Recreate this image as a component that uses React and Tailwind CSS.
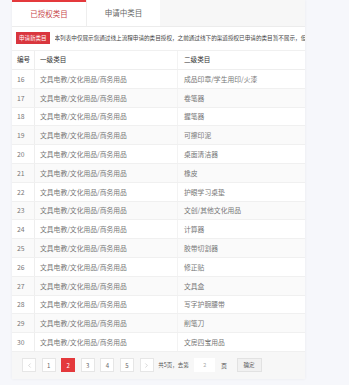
import React from "react";
import { ChevronLeft, ChevronRight } from "lucide-react";

const rows = [
  [16, "成品印章/学生用印/火漆"],
  [17, "卷笔器"],
  [18, "握笔器"],
  [19, "可擦印泥"],
  [20, "桌面清洁器"],
  [21, "橡皮"],
  [22, "护眼学习桌垫"],
  [23, "文创/其他文化用品"],
  [24, "计算器"],
  [25, "胶带切割器"],
  [26, "修正贴"],
  [27, "文具盒"],
  [28, "写字护腕腰带"],
  [29, "削笔刀"],
  [30, "文房四宝用品"],
];

const font = { fontFamily: '"Noto Sans CJK SC", "Noto Sans", sans-serif' };

const PageBtn = ({ children, active }) => (
  <div
    className={`w-[14px] h-[14px] flex items-center justify-center border text-[6px] ${
      active ? "bg-[#e4393c] border-[#e4393c] text-white" : "bg-white border-[#e6e6e6] text-[#666]"
    }`}
  >
    {children}
  </div>
);

const App = () => {
  return (
    <div className="min-h-screen bg-[#f6f7fb] pl-[12px]" style={font}>
      <div className="w-[293px] h-[379px] bg-white shadow-[0_0_3px_rgba(0,0,0,0.06)] flex flex-col">
        {/* tabs */}
        <div className="flex h-[27px] bg-[#f7f7f7] border-b border-[#ececec]">
          <div className="w-[74px] bg-white border-t-2 border-[#e4393c] flex items-center justify-center text-[7.5px] text-[#c8474a]">
            已授权类目
          </div>
          <div className="w-[74px] bg-white border-l border-[#eee] flex items-center justify-center text-[7.5px] text-[#666]">
            申请中类目
          </div>
        </div>

        {/* notice */}
        <div className="flex items-center h-[22px] pl-[4px] gap-[5px] overflow-hidden">
          <div className="shrink-0 h-[12px] px-[3px] bg-[#d9363e] text-white text-[5.5px] flex items-center">
            申请新类目
          </div>
          <div className="whitespace-nowrap overflow-hidden text-[5.6px] text-[#444]">
            本列表中仅展示您通过线上流程申请的类目授权，之前通过线下的渠道授权已申请的类目暂不展示，但
          </div>
        </div>

        {/* table */}
        <div className="mt-[1px] border-t border-[#f0f0f0]">
          <div className="grid grid-cols-[23px_143px_1fr] h-[19px] items-stretch text-[6.6px] text-[#333] border-b border-[#eee]">
            <div className="flex items-center pl-[5px] border-r border-[#eee]">编号</div>
            <div className="flex items-center pl-[5px] border-r border-[#f3f3f3]">一级类目</div>
            <div className="flex items-center pl-[6px]">二级类目</div>
          </div>
          {rows.map(([id, name], i) => (
            <div
              key={id}
              className={`grid grid-cols-[23px_143px_1fr] h-[18.8px] text-[6.8px] text-[#777] border-b border-[#f0f0f0] ${
                i % 2 === 1 ? "bg-[#fafafa]" : "bg-white"
              }`}
            >
              <div className="flex items-center pl-[5px] border-r border-[#eee]">{id}</div>
              <div className="flex items-center pl-[5px] border-r border-[#f3f3f3]">文具电教/文化用品/商务用品</div>
              <div className="flex items-center pl-[6px]">{name}</div>
            </div>
          ))}
        </div>

        {/* pagination */}
        <div className="flex-1 bg-[#f7f7f7] flex items-center pl-[10px] gap-[5.6px]">
          <PageBtn>
            <ChevronLeft size={7} strokeWidth={1.5} className="text-[#aaa]" />
          </PageBtn>
          <PageBtn>1</PageBtn>
          <PageBtn active>2</PageBtn>
          <PageBtn>3</PageBtn>
          <PageBtn>4</PageBtn>
          <PageBtn>5</PageBtn>
          <PageBtn>
            <ChevronRight size={7} strokeWidth={1.5} className="text-[#aaa]" />
          </PageBtn>
          <span className="text-[5.5px] text-[#555] -ml-[1px]">共5页，去第</span>
          <div className="w-[21px] h-[14px] bg-white flex items-center justify-center text-[5.5px] text-[#aaa]">
            2
          </div>
          <span className="text-[6px] text-[#555]">页</span>
          <div className="ml-[4px] w-[25px] h-[14px] bg-[#f1f1f1] border border-[#e2e2e2] flex items-center justify-center text-[5.5px] text-[#555]">
            确定
          </div>
        </div>
      </div>
    </div>
  );
};

export default App;
